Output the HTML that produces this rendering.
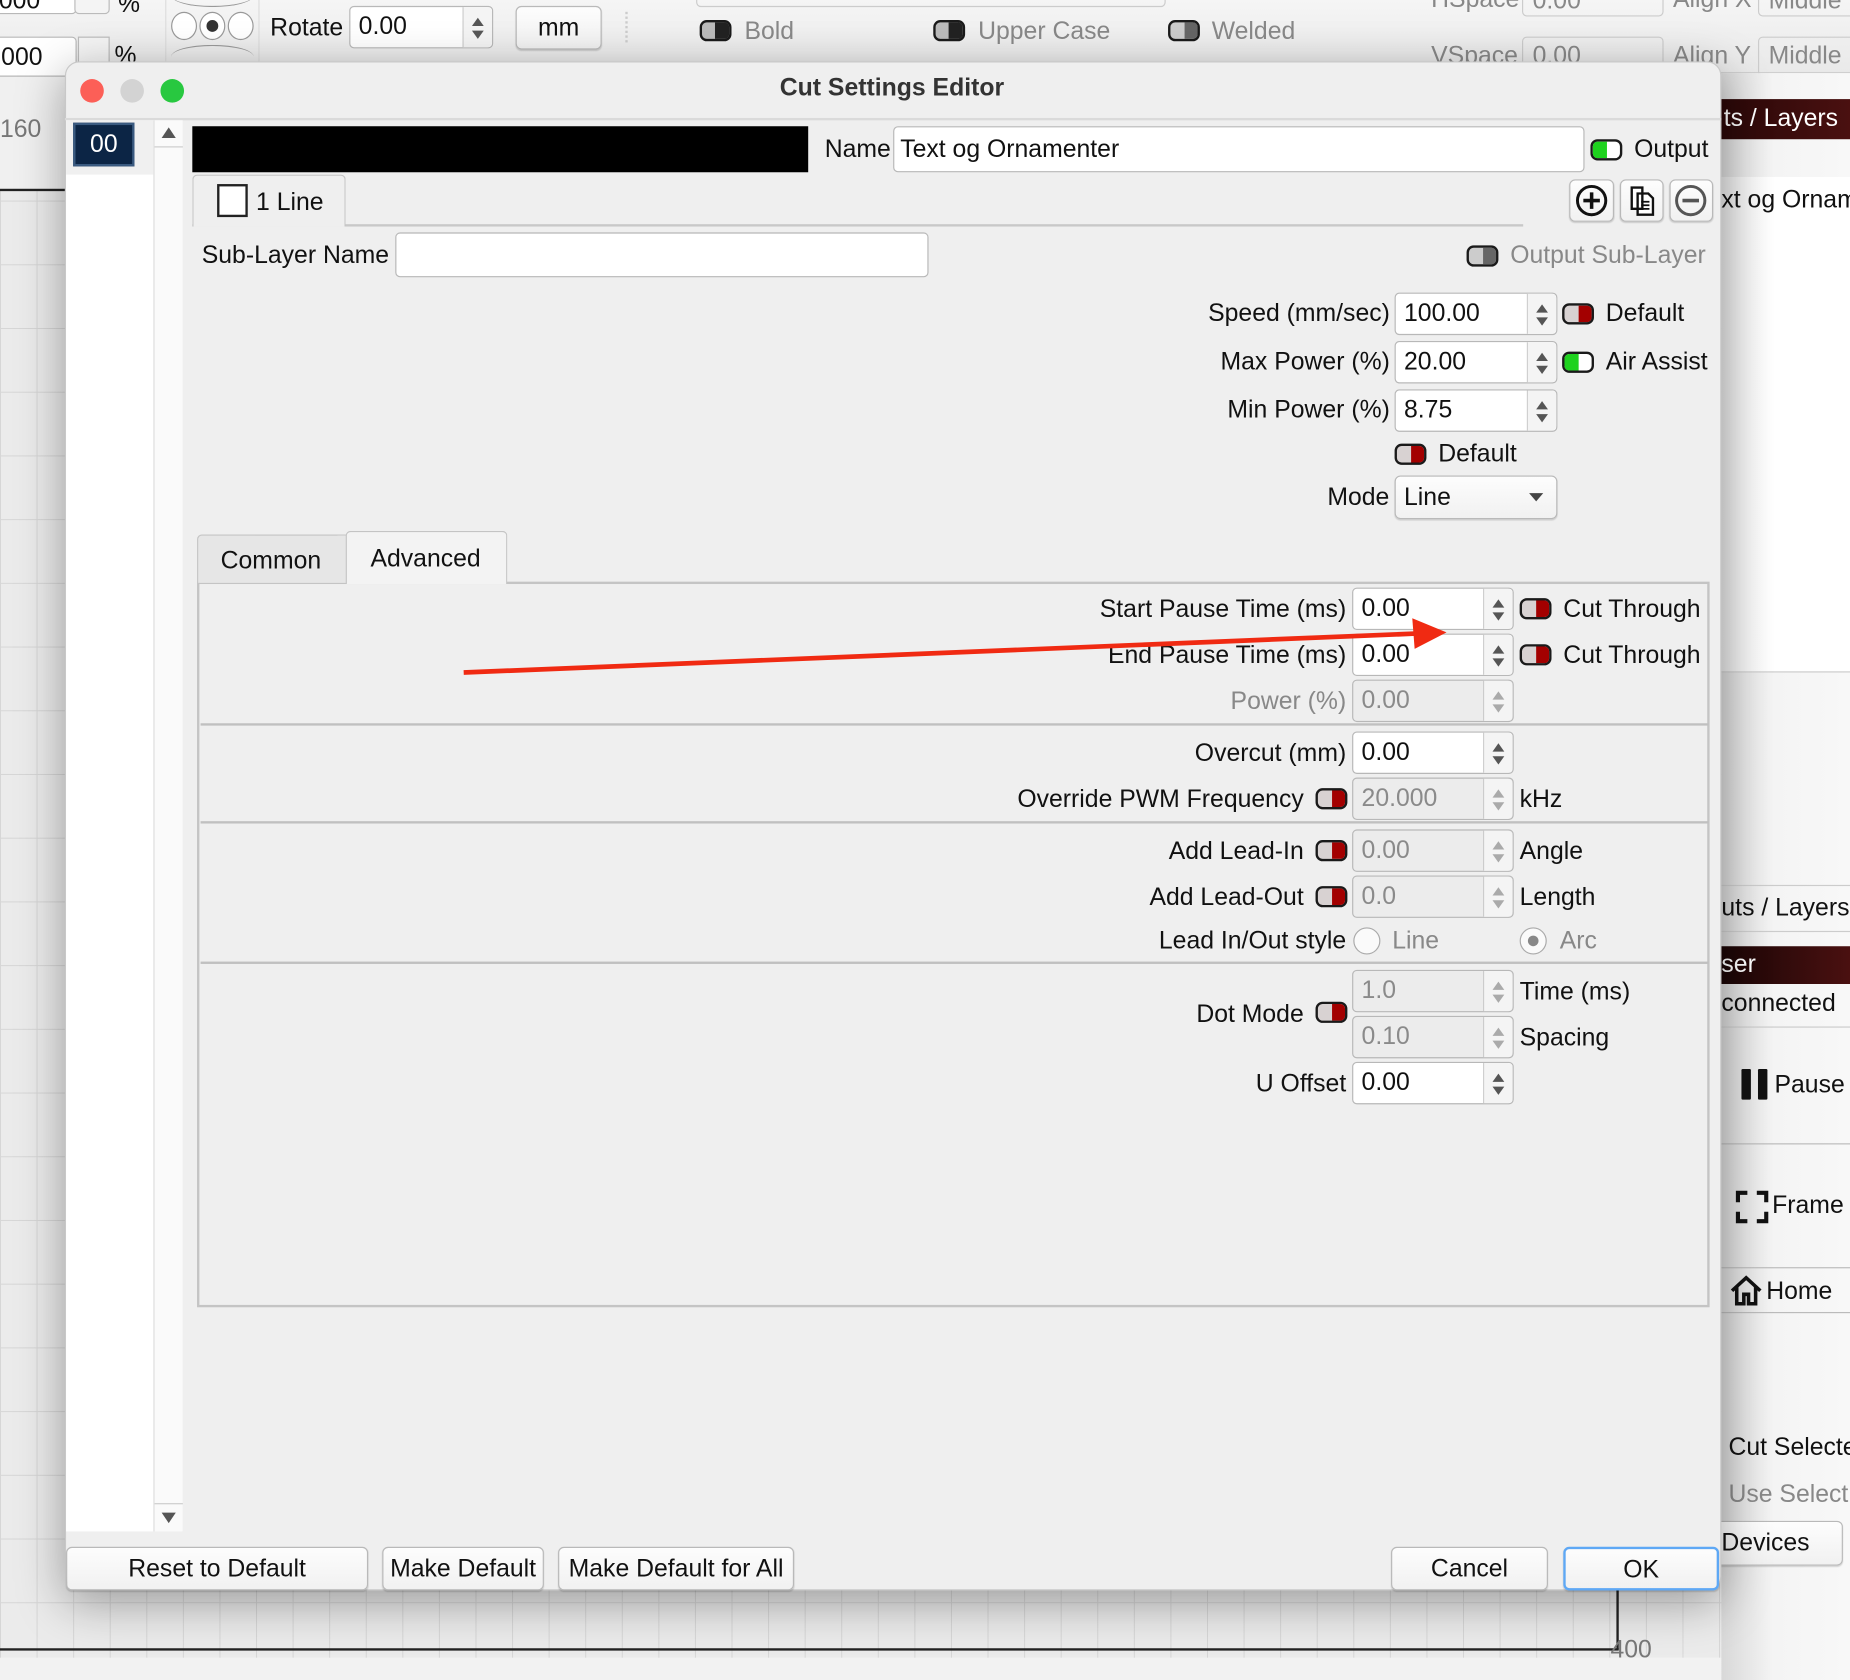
<!DOCTYPE html>
<html><head><meta charset="utf-8"><style>
*{box-sizing:border-box;margin:0;padding:0}
html,body{width:1850px;height:1680px;overflow:hidden;background:#f2f2f2}
#root{position:absolute;left:0;top:0;width:1568px;height:1424px;transform:scale(1.17985);transform-origin:0 0;font-family:"Liberation Sans",sans-serif;font-size:21px;color:#111;overflow:hidden;background:#f0f0f0}
.a{position:absolute;white-space:nowrap}
.lbl{position:absolute;white-space:nowrap;line-height:24px}
.r{text-align:right}
.inp{position:absolute;background:#fff;border:1px solid #b8b8b8;border-radius:4px;padding-left:8px;line-height:34px;height:36px;overflow:hidden;white-space:nowrap}
.spin{position:absolute;background:#fff;border:1px solid #b8b8b8;border-radius:4px;height:36px;line-height:34px;padding-left:7px}
.spin.dis{background:#ececec;color:#8a8a8a}
.spin:after{content:"";position:absolute;right:0;top:0;bottom:0;width:24px;border-left:1px solid #c8c8c8;background:#f4f4f4;border-radius:0 4px 4px 0}
.spin i{position:absolute;right:7px;width:0;height:0;border-left:5px solid transparent;border-right:5px solid transparent;z-index:2}
.spin i.u{top:9px;border-bottom:7px solid #555}
.spin i.d{top:20px;border-top:7px solid #555}
.spin.dis i.u{border-bottom-color:#aaa}.spin.dis i.d{border-top-color:#aaa}
.tg{position:absolute;width:27px;height:18px;border:2.5px solid #1a1a1a;border-radius:6px;overflow:hidden;background:#d8d2d2}
.tg.red:after{content:"";position:absolute;right:0;top:0;bottom:0;width:11px;background:#a30000;border-radius:0 3px 3px 0}
.tg.grn{background:#fff}.tg.grn:before{content:"";position:absolute;left:0;top:0;bottom:0;width:12px;background:#1ed21e}
.tg.gry{background:#ccc}.tg.gry:after{content:"";position:absolute;right:0;top:0;bottom:0;width:11px;background:#666}
.tg.blk{background:#bbb}.tg.blk:after{content:"";position:absolute;right:0;top:0;bottom:0;width:12px;background:#222}
.btn{position:absolute;background:linear-gradient(#fdfdfd,#f1f1f1);border:1px solid #b9b9b9;border-radius:5px;text-align:center;line-height:36px;box-shadow:0 1px 1px rgba(0,0,0,.15)}
.sep{position:absolute;left:170px;width:1278px;height:2px;background:#c0c0c0}
.grey{color:#888}
</style></head><body><div id="root">

<div class="a" style="left:0;top:62px;width:1460px;height:1362px;background-color:#ebebeb;background-image:linear-gradient(90deg,#d6d6d6 1px,transparent 1px),linear-gradient(#d6d6d6 1px,transparent 1px);background-size:31px 54px"></div>
<div class="a" style="left:0;top:62px;width:55px;height:100px;background:#f0f0f0;border-bottom:2px solid #222"></div>
<div class="a" style="left:0;top:98px;color:#777">160</div>
<div class="a" style="left:0;top:1397px;width:1372px;height:2px;background:#222"></div>
<div class="a" style="left:1370px;top:1348px;width:2px;height:50px;background:#222"></div>
<div class="a" style="left:1365px;top:1387px;color:#777">400</div>
<div class="a" style="left:0;top:1405px;width:1460px;height:20px;background:#f2f2f2"></div>

<div class="a" style="left:0;top:0;width:1568px;height:62px;background:linear-gradient(#f5f5f5,#e9e9e9);border-bottom:1px solid #cfcfcf"></div>
<div class="inp" style="left:-10px;top:-14px;width:75px;height:26px;line-height:28px">000</div>
<div class="a" style="left:63px;top:-14px;width:30px;height:26px;border:1px solid #bbb;border-radius:0 0 4px 4px;background:#f4f4f4"></div>
<div class="a" style="left:100px;top:-8px">%</div>
<div class="inp" style="left:-10px;top:31px;width:75px;height:34px;padding-left:10px">000</div>
<div class="a" style="left:66px;top:31px;width:27px;height:30px;border:1px solid #bbb;background:#f4f4f4"></div>
<div class="a" style="left:97px;top:36px">%</div>
<div class="a" style="left:140px;top:0;width:80px;height:62px;border-left:1px solid #ddd;border-right:1px solid #ddd"></div>
<div class="a" style="left:145px;top:10px;width:22px;height:24px;border:1px solid #999;border-radius:50%;background:#fff"></div>
<div class="a" style="left:169px;top:10px;width:22px;height:24px;border:1px solid #999;border-radius:50%;background:#fff"></div>
<div class="a" style="left:175px;top:17px;width:10px;height:10px;border-radius:50%;background:#333"></div>
<div class="a" style="left:193px;top:10px;width:22px;height:24px;border:1px solid #999;border-radius:50%;background:#fff"></div>
<div class="a" style="left:145px;top:-14px;width:70px;height:20px;border-bottom:1px solid #999;border-radius:50%"></div>
<div class="a" style="left:145px;top:38px;width:70px;height:20px;border-top:1px solid #999;border-radius:50%"></div>
<div class="a" style="left:229px;top:12px">Rotate</div>
<div class="spin" style="left:296px;top:5px;width:122px;height:36px">0.00<i class="u"></i><i class="d"></i></div>
<div class="btn" style="left:437px;top:5px;width:73px;height:37px">mm</div>
<div class="a" style="left:530px;top:10px;width:3px;height:26px;border-left:2px dotted #ccc"></div>
<div class="a" style="left:590px;top:-10px;width:398px;height:16px;border:1px solid #ccc;border-radius:4px"></div>
<div class="tg blk" style="left:593px;top:17px"></div><div class="a grey" style="left:631px;top:15px">Bold</div>
<div class="tg blk" style="left:791px;top:17px"></div><div class="a grey" style="left:829px;top:15px">Upper Case</div>
<div class="tg gry" style="left:990px;top:17px"></div><div class="a grey" style="left:1027px;top:15px">Welded</div>
<div class="a grey" style="left:1213px;top:-12px">HSpace</div>
<div class="a grey" style="left:1290px;top:-10px;width:120px;height:24px;border:1px solid #ccc;border-radius:4px;padding-left:8px;line-height:20px">0.00</div>
<div class="a grey" style="left:1418px;top:-12px">Align X</div>
<div class="a grey" style="left:1490px;top:-10px;width:90px;height:24px;border:1px solid #ccc;border-radius:4px;padding-left:8px;line-height:20px">Middle</div>
<div class="a grey" style="left:1213px;top:36px">VSpace</div>
<div class="a grey" style="left:1290px;top:31px;width:120px;height:34px;border:1px solid #ccc;border-radius:4px;padding-left:8px;line-height:32px">0.00</div>
<div class="a grey" style="left:1418px;top:36px">Align Y</div>
<div class="a grey" style="left:1490px;top:31px;width:90px;height:34px;border:1px solid #ccc;border-radius:4px;padding-left:8px;line-height:32px">Middle</div>

<div class="a" style="left:1459px;top:62px;width:109px;height:1362px;background:linear-gradient(90deg,#d8d8d8,#f4f4f4 40%,#f8f8f8)"></div>
<div class="a" style="left:1459px;top:84px;width:109px;height:34px;background:linear-gradient(90deg,#2a0808,#4a1010);color:#fff;line-height:34px;padding-left:2px">ts / Layers</div>
<div class="a" style="left:1459px;top:150px;width:109px;height:420px;background:linear-gradient(90deg,#e6e6e6,#fff 40%);border-bottom:1px solid #ccc"></div>
<div class="a" style="left:1459px;top:158px">xt og Ornam</div>
<div class="a" style="left:1459px;top:750px;width:109px;height:40px;border-top:1px solid #ccc;border-bottom:1px solid #ccc;line-height:38px">uts / Layers</div>
<div class="a" style="left:1459px;top:802px;width:109px;height:32px;background:linear-gradient(90deg,#1a0606,#4a1010);color:#fff;line-height:32px">ser</div>
<div class="a" style="left:1459px;top:839px">connected</div>
<div class="a" style="left:1459px;top:870px;width:109px;height:100px;border-top:1px solid #ccc;border-bottom:1px solid #bbb"></div>
<div class="a" style="left:1476px;top:906px;width:8px;height:26px;background:#111;border-radius:1px"></div>
<div class="a" style="left:1490px;top:906px;width:8px;height:26px;background:#111;border-radius:1px"></div>
<div class="a" style="left:1504px;top:908px">Pause</div>
<div class="a" style="left:1459px;top:975px;width:109px;height:100px;border-bottom:1px solid #bbb"></div>
<svg class="a" style="left:1471px;top:1009px" width="28" height="28" viewBox="0 0 28 28"><path d="M2 10V2H10M18 2H26V10M26 18V26H18M10 26H2V18" fill="none" stroke="#111" stroke-width="3.5"/></svg>
<div class="a" style="left:1502px;top:1010px">Frame</div>
<svg class="a" style="left:1466px;top:1081px" width="28" height="26" viewBox="0 0 28 26"><path d="M2 13 L14 2 L26 13 M6 10 V24 H12 V16 H16 V24 H22 V10" fill="none" stroke="#111" stroke-width="3"/></svg>
<div class="a" style="left:1497px;top:1083px">Home</div>
<div class="a" style="left:1459px;top:1112px;width:109px;height:1px;background:#bbb"></div>
<div class="a" style="left:1465px;top:1215px">Cut Selecte</div>
<div class="a grey" style="left:1465px;top:1255px">Use Select</div>
<div class="btn" style="left:1440px;top:1289px;width:122px;height:38px;text-align:left;padding-left:18px">Devices</div>

<div class="a" style="left:55px;top:52px;width:1404px;height:1296px;background:#efefef;border-radius:12px;box-shadow:0 10px 40px rgba(0,0,0,.35);border:1px solid #c8c8c8"></div>
<div class="a" style="left:55px;top:100px;width:1404px;height:2px;background:#dadada"></div>
<div class="a" style="left:68px;top:67px;width:20px;height:20px;border-radius:50%;background:#fc5f57"></div>
<div class="a" style="left:102px;top:67px;width:20px;height:20px;border-radius:50%;background:#d3d3d3"></div>
<div class="a" style="left:136px;top:67px;width:20px;height:20px;border-radius:50%;background:#28c840"></div>
<div class="a" style="left:0;top:63px;width:1512px;text-align:center;font-weight:bold;color:#333">Cut Settings Editor</div>

<div class="a" style="left:56px;top:102px;width:99px;height:1196px;background:#fff;border-right:1px solid #d4d4d4"></div>
<div class="a" style="left:130px;top:102px;width:25px;height:1196px;background:#fafafa;border-left:1px solid #ddd"></div>
<div class="a" style="left:137px;top:108px;width:0;height:0;border-left:6px solid transparent;border-right:6px solid transparent;border-bottom:9px solid #555"></div>
<div class="a" style="left:137px;top:1282px;width:0;height:0;border-left:6px solid transparent;border-right:6px solid transparent;border-top:9px solid #555"></div>
<div class="a" style="left:131px;top:124px;width:24px;height:1px;background:#ccc"></div>
<div class="a" style="left:131px;top:1274px;width:24px;height:1px;background:#ccc"></div>
<div class="a" style="left:56px;top:102px;width:74px;height:46px;background:#f0f0f0"></div>
<div class="a" style="left:62px;top:104px;width:52px;height:37px;background:#0c2545;border:2px solid #3a5a80;color:#fff;text-align:center;line-height:33px">00</div>

<div class="a" style="left:163px;top:107px;width:522px;height:39px;background:#000"></div>
<div class="lbl" style="left:699px;top:115px">Name</div>
<div class="inp" style="left:757px;top:107px;width:586px;height:39px;line-height:37px;padding-left:5px">Text og Ornamenter</div>
<div class="tg grn" style="left:1348px;top:118px"></div>
<div class="lbl" style="left:1385px;top:115px">Output</div>

<div class="a" style="left:163px;top:190px;width:1128px;height:2px;background:#c8c8c8"></div>
<div class="a" style="left:163px;top:148px;width:130px;height:44px;border:1px solid #c4c4c4;border-bottom:none;border-radius:4px 4px 0 0;background:#efefef"></div>
<div class="a" style="left:184px;top:156px;width:26px;height:28px;border:2px solid #222;background:#fff"></div>
<div class="lbl" style="left:217px;top:160px">1 Line</div>
<div class="btn" style="left:1330px;top:152px;width:38px;height:36px"></div>
<svg class="a" style="left:1335px;top:156px" width="28" height="28" viewBox="0 0 28 28"><circle cx="14" cy="14" r="12" fill="none" stroke="#111" stroke-width="2.5"/><path d="M14 7V21M7 14H21" stroke="#111" stroke-width="3"/></svg>
<div class="btn" style="left:1373px;top:152px;width:37px;height:36px"></div>
<svg class="a" style="left:1377px;top:155px" width="30" height="30" viewBox="0 0 30 30"><path d="M6 4H15V22H6Z M11 9H20L24 13V27H11Z" fill="#fff" stroke="#111" stroke-width="2"/><path d="M14 16H21M14 19H21M14 22H21" stroke="#111" stroke-width="1.5"/></svg>
<div class="btn" style="left:1415px;top:152px;width:37px;height:36px"></div>
<svg class="a" style="left:1419px;top:156px" width="28" height="28" viewBox="0 0 28 28"><circle cx="14" cy="14" r="12" fill="none" stroke="#555" stroke-width="2.5"/><path d="M7 14H21" stroke="#555" stroke-width="3"/></svg>

<div class="lbl" style="left:171px;top:205px">Sub-Layer Name</div>
<div class="inp" style="left:335px;top:197px;width:452px;height:38px"></div>
<div class="tg gry" style="left:1243px;top:208px"></div>
<div class="lbl grey" style="left:1280px;top:205px">Output Sub-Layer</div>

<div class="lbl r" style="left:900px;width:278px;top:254px">Speed (mm/sec)</div>
<div class="spin" style="left:1182px;top:248px;width:138px">100.00<i class="u"></i><i class="d"></i></div>
<div class="tg red" style="left:1324px;top:257px"></div><div class="lbl" style="left:1361px;top:254px">Default</div>
<div class="lbl r" style="left:900px;width:278px;top:295px">Max Power (%)</div>
<div class="spin" style="left:1182px;top:289px;width:138px">20.00<i class="u"></i><i class="d"></i></div>
<div class="tg grn" style="left:1324px;top:298px"></div><div class="lbl" style="left:1361px;top:295px">Air Assist</div>
<div class="lbl r" style="left:900px;width:278px;top:336px">Min Power (%)</div>
<div class="spin" style="left:1182px;top:330px;width:138px">8.75<i class="u"></i><i class="d"></i></div>
<div class="tg red" style="left:1182px;top:376px"></div><div class="lbl" style="left:1219px;top:373px">Default</div>
<div class="lbl" style="left:1125px;top:410px">Mode</div>
<div class="btn" style="left:1182px;top:403px;width:138px;height:37px;text-align:left;padding-left:7px">Line</div>
<div class="a" style="left:1296px;top:418px;width:0;height:0;border-left:6px solid transparent;border-right:6px solid transparent;border-top:7px solid #444"></div>

<div class="a" style="left:167px;top:493px;width:1282px;height:615px;border:2px solid #c4c4c4;background:#efefef"></div>
<div class="a" style="left:167px;top:453px;width:127px;height:41px;border:1px solid #c4c4c4;border-bottom:none;background:#e6e6e6;border-radius:4px 0 0 0"></div>
<div class="lbl" style="left:187px;top:464px">Common</div>
<div class="a" style="left:293px;top:450px;width:137px;height:45px;border:1px solid #c4c4c4;border-bottom:none;background:#f3f3f3;border-radius:4px 4px 0 0"></div>
<div class="lbl" style="left:314px;top:462px">Advanced</div>

<div class="lbl r" style="left:700px;width:441px;top:505px">Start Pause Time (ms)</div>
<div class="spin" style="left:1146px;top:498px;width:137px">0.00<i class="u"></i><i class="d"></i></div>
<div class="tg red" style="left:1288px;top:507px"></div><div class="lbl" style="left:1325px;top:505px">Cut Through</div>
<div class="lbl r" style="left:700px;width:441px;top:544px">End Pause Time (ms)</div>
<div class="spin" style="left:1146px;top:537px;width:137px">0.00<i class="u"></i><i class="d"></i></div>
<div class="tg red" style="left:1288px;top:546px"></div><div class="lbl" style="left:1325px;top:544px">Cut Through</div>
<div class="lbl r grey" style="left:700px;width:441px;top:583px">Power (%)</div>
<div class="spin dis" style="left:1146px;top:576px;width:137px">0.00<i class="u"></i><i class="d"></i></div>
<div class="sep" style="top:613px"></div>
<div class="lbl r" style="left:700px;width:441px;top:627px">Overcut (mm)</div>
<div class="spin" style="left:1146px;top:620px;width:137px">0.00<i class="u"></i><i class="d"></i></div>
<div class="lbl r" style="left:700px;width:405px;top:666px">Override PWM Frequency</div>
<div class="tg red" style="left:1115px;top:668px"></div>
<div class="spin dis" style="left:1146px;top:659px;width:137px">20.000<i class="u"></i><i class="d"></i></div>
<div class="lbl" style="left:1288px;top:666px">kHz</div>
<div class="sep" style="top:696px"></div>
<div class="lbl r" style="left:700px;width:405px;top:710px">Add Lead-In</div>
<div class="tg red" style="left:1115px;top:712px"></div>
<div class="spin dis" style="left:1146px;top:703px;width:137px">0.00<i class="u"></i><i class="d"></i></div>
<div class="lbl" style="left:1288px;top:710px">Angle</div>
<div class="lbl r" style="left:700px;width:405px;top:749px">Add Lead-Out</div>
<div class="tg red" style="left:1115px;top:751px"></div>
<div class="spin dis" style="left:1146px;top:742px;width:137px">0.0<i class="u"></i><i class="d"></i></div>
<div class="lbl" style="left:1288px;top:749px">Length</div>
<div class="lbl r" style="left:700px;width:441px;top:786px">Lead In/Out style</div>
<div class="a" style="left:1147px;top:786px;width:23px;height:23px;border:1px solid #aaa;border-radius:50%;background:#fafafa"></div>
<div class="lbl grey" style="left:1180px;top:786px">Line</div>
<div class="a" style="left:1288px;top:786px;width:23px;height:23px;border:1px solid #aaa;border-radius:50%;background:#fafafa"></div>
<div class="a" style="left:1295px;top:793px;width:9px;height:9px;border-radius:50%;background:#888"></div>
<div class="lbl grey" style="left:1322px;top:786px">Arc</div>
<div class="sep" style="top:815px"></div>
<div class="spin dis" style="left:1146px;top:822px;width:137px">1.0<i class="u"></i><i class="d"></i></div>
<div class="lbl" style="left:1288px;top:829px">Time (ms)</div>
<div class="lbl r" style="left:700px;width:405px;top:848px">Dot Mode</div>
<div class="tg red" style="left:1115px;top:849px"></div>
<div class="spin dis" style="left:1146px;top:861px;width:137px">0.10<i class="u"></i><i class="d"></i></div>
<div class="lbl" style="left:1288px;top:868px">Spacing</div>
<div class="lbl r" style="left:700px;width:441px;top:907px">U Offset</div>
<div class="spin" style="left:1146px;top:900px;width:137px">0.00<i class="u"></i><i class="d"></i></div>

<svg class="a" style="left:0;top:0" width="1568" height="1424"><line x1="393" y1="570" x2="1200" y2="537" stroke="#f02a12" stroke-width="4"/><polygon points="1226,536 1197,524 1199,550" fill="#f02a12"/></svg>

<div class="btn" style="left:56px;top:1311px;width:256px;height:37px">Reset to Default</div>
<div class="btn" style="left:324px;top:1311px;width:137px;height:37px">Make Default</div>
<div class="btn" style="left:473px;top:1311px;width:200px;height:37px">Make Default for All</div>
<div class="btn" style="left:1179px;top:1311px;width:133px;height:37px">Cancel</div>
<div class="btn" style="left:1325px;top:1311px;width:132px;height:37px;border:2px solid #5ea8f5">OK</div>

</div></body></html>
